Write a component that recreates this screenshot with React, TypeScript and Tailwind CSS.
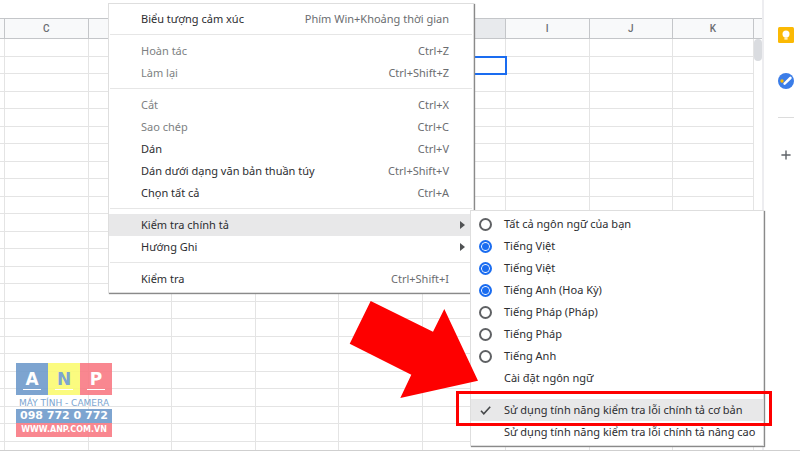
import { Fragment } from 'react';
import { Plus } from 'lucide-react';

type Entry = { label: string; keys?: string; disabled?: boolean; active?: boolean; submenu?: boolean };

const columns = ['C', 'D', 'E', 'F', 'G', 'H', 'I', 'J', 'K'];
const rows = Array.from({ length: 24 }, (_, i) => i);

const groups: Entry[][] = [
  [{ label: 'Biểu tượng cảm xúc', keys: 'Phím Win+Khoảng thời gian' }],
  [
    { label: 'Hoàn tác', keys: 'Ctrl+Z', disabled: true },
    { label: 'Làm lại', keys: 'Ctrl+Shift+Z', disabled: true },
  ],
  [
    { label: 'Cắt', keys: 'Ctrl+X', disabled: true },
    { label: 'Sao chép', keys: 'Ctrl+C', disabled: true },
    { label: 'Dán', keys: 'Ctrl+V' },
    { label: 'Dán dưới dạng văn bản thuần túy', keys: 'Ctrl+Shift+V' },
    { label: 'Chọn tất cả', keys: 'Ctrl+A' },
  ],
  [
    { label: 'Kiểm tra chính tả', active: true, submenu: true },
    { label: 'Hướng Ghi', submenu: true },
  ],
  [{ label: 'Kiểm tra', keys: 'Ctrl+Shift+I' }],
];

const languages = [
  { label: 'Tất cả ngôn ngữ của bạn', on: false },
  { label: 'Tiếng Việt', on: true },
  { label: 'Tiếng Việt', on: true },
  { label: 'Tiếng Anh (Hoa Kỳ)', on: true },
  { label: 'Tiếng Pháp (Pháp)', on: false },
  { label: 'Tiếng Pháp', on: false },
  { label: 'Tiếng Anh', on: false },
];

function Sheet() {
  return (
    <table className="w-full table-fixed border-separate border-spacing-0">
      <colgroup>
        <col className="w-[5px]" />
        {columns.map((c) => (
          <col key={c} className={c === 'K' ? 'w-[81px]' : ''} />
        ))}
      </colgroup>
      <thead>
        <tr className="h-[21px]">
          <td className="border-y border-r border-[#c4c6c9] bg-[#f8f9fa] p-0" />
          {columns.map((c) => (
            <th
              key={c}
              scope="col"
              className={`border-y border-r border-[#c4c6c9] p-0 font-[Roboto,sans-serif] text-[10px] leading-4 font-medium text-[#6b6e72] ${c === 'H' ? 'bg-[#e8eaed]' : 'bg-[#f8f9fa]'}`}
            >
              {c}
            </th>
          ))}
        </tr>
      </thead>
      <tbody>
        {rows.map((r) => (
          <tr key={r} className="h-[18px] even:h-[17px]">
            <td className="border-r border-b border-[#e4e4e4] p-0" />
            {columns.map((c) => (
              <td
                key={c}
                className={`border-r border-b border-[#e4e4e4] p-0 ${c === 'H' && r === 1 ? 'outline-2 -outline-offset-1 outline-[#1a6cf0]' : ''}`}
              />
            ))}
          </tr>
        ))}
      </tbody>
    </table>
  );
}

function SidePanel() {
  return (
    <aside className="flex w-[38px] flex-col items-center border-l-2 border-[#ededf0] pl-2 pt-[27px]">
      <button aria-label="Keep">
        <svg viewBox="0 0 16 16" className="block size-4">
          <rect width="16" height="16" rx="1.5" fill="#fbb904" />
          <circle cx="8" cy="7" r="3.5" fill="#fff" />
          <path d="M6.4 9h3.2v1.6H6.4zM6.4 11.3h3.2v1.3H6.4z" fill="#fff" />
        </svg>
      </button>
      <button aria-label="Tasks" className="mt-[30px]">
        <svg viewBox="0 0 16 16" className="block size-4">
          <circle cx="8" cy="8" r="8" fill="#3b7de8" />
          <circle cx="4" cy="8" r="1.7" fill="#fbbc04" />
          <path d="M6.6 10.6 12.4 5" stroke="#fff" strokeWidth="2.6" strokeLinecap="round" />
        </svg>
      </button>
      <hr className="mt-7 w-4 border-[#dcdcdc]" />
      <button aria-label="Thêm" className="mt-[30px] text-[#5f6368]">
        <Plus className="block size-[14px]" strokeWidth={2.4} />
      </button>
    </aside>
  );
}

function ContextMenu() {
  return (
    <div role="menu" className="absolute top-[3px] left-[108px] w-[366px] border border-[#dedede] bg-white pt-1 pb-[2px] shadow-[1px_1px_1px_#8a8a8a]">
      {groups.map((group, g) => (
        <Fragment key={g}>
          {g > 0 && <hr className="mx-px mt-1 mb-[5px] border-[#e6e6e6]" />}
          {group.map((e) => (
            <button
              key={e.label}
              role="menuitem"
              disabled={e.disabled}
              className={`flex h-[22px] w-full items-center justify-between pl-8 ${e.submenu ? 'pr-2' : 'pr-6'} ${e.active ? 'bg-[#e8e8e9]' : ''} ${e.disabled ? 'text-[#7d7f82]' : 'text-[#2c2d30]'}`}
            >
              <span>{e.label}</span>
              {e.keys && <span className="text-[#6b6d70]">{e.keys}</span>}
              {e.submenu && (
                <svg viewBox="0 0 5 8" className="h-2 w-[5px]">
                  <path d="M0 0 5 4 0 8Z" fill="#505254" />
                </svg>
              )}
            </button>
          ))}
        </Fragment>
      ))}
    </div>
  );
}

function SpellingMenu() {
  return (
    <div role="menu" className="absolute top-[210px] left-[470px] w-[294px] border border-[#dedede] bg-white py-[2px] text-[#2c2d30] shadow-[1px_1px_1px_#8a8a8a]">
      {languages.map((l, i) => (
        <label key={i} className="flex h-[22px] items-center gap-3 pl-2">
          <input
            type="checkbox"
            defaultChecked={l.on}
            className="size-[13px] appearance-none rounded-full border-2 border-[#5f6164] checked:border-[#1a6cf0] checked:bg-[#1a6cf0] checked:shadow-[inset_0_0_0_1px_#fff]"
          />
          {l.label}
        </label>
      ))}
      <button role="menuitem" className="flex h-[22px] w-full items-center pl-[33px]">
        Cài đặt ngôn ngữ
      </button>
      <hr className="mx-px mt-1 mb-[5px] border-[#e6e6e6]" />
      <button role="menuitemcheckbox" aria-checked="true" className="flex h-[22px] w-full items-center gap-3 bg-[#e8e8e9] pl-2">
        <svg viewBox="0 0 13 13" className="size-[13px]" fill="none" stroke="#46484a" strokeWidth="1.6">
          <path d="M2 6.8 4.8 9.8 11.2 2.8" />
        </svg>
        Sử dụng tính năng kiểm tra lỗi chính tả cơ bản
      </button>
      <button role="menuitemcheckbox" aria-checked="false" className="flex h-[22px] w-full items-center pl-[33px]">
        Sử dụng tính năng kiểm tra lỗi chính tả nâng cao
      </button>
    </div>
  );
}

function Watermark() {
  const tiles = [
    { letter: 'A', tone: 'bg-[#6f9bcb] text-white' },
    { letter: 'N', tone: 'bg-[#fbfb72] text-[#6f9bcb]' },
    { letter: 'P', tone: 'bg-[#f97b84] text-white' },
  ];
  return (
    <div className="absolute top-[363px] left-4 w-24 text-center font-['DejaVu_Sans',sans-serif] font-bold whitespace-nowrap text-white opacity-90">
      <div className="grid grid-cols-3">
        {tiles.map((t) => (
          <div key={t.letter} className={`flex h-8 flex-col items-center justify-center text-[17px] leading-5 ${t.tone}`}>
            {t.letter}
            <span className="h-px w-[18px] bg-white" />
          </div>
        ))}
      </div>
      <p className="h-[14px] text-[9px] leading-[17px] font-normal text-[#6f9bcb]">MÁY TÍNH - CAMERA</p>
      <p className="h-[14px] bg-[#6f9bcb] text-[11px] leading-[14px]">098 772 0 772</p>
      <p className="h-[14px] bg-[#f97b84] text-[8px] leading-[13px]">WWW.ANP.COM.VN</p>
    </div>
  );
}

export default function App() {
  return (
    <div className="relative flex h-screen overflow-hidden border-b border-[#cfcfcf] bg-white font-['Noto_Sans',sans-serif] text-[11px] leading-4">
      <main className="min-w-0 flex-1 pt-[18px]">
        <Sheet />
      </main>
      <div className="w-2 pt-[18px]">
        <div className="h-[21px] border-y border-[#c4c6c9] bg-[#f8f9fa]" />
        <div className="h-[22px] rounded-full bg-[#dadce0]" />
      </div>
      <SidePanel />
      <ContextMenu />
      <SpellingMenu />
      <Watermark />
      <svg viewBox="0 0 130 98" className="absolute top-[301px] left-[349px] w-[130px]">
        <path d="M21.7 0 84 30.7 95.3 8 129 79.7 51.3 97 62.3 73.7 .7 42.7Z" fill="#fe0000" />
      </svg>
      <div className="absolute top-[391px] left-[456px] h-[35px] w-[316px] border-3 border-[#fe0000]" />
    </div>
  );
}
